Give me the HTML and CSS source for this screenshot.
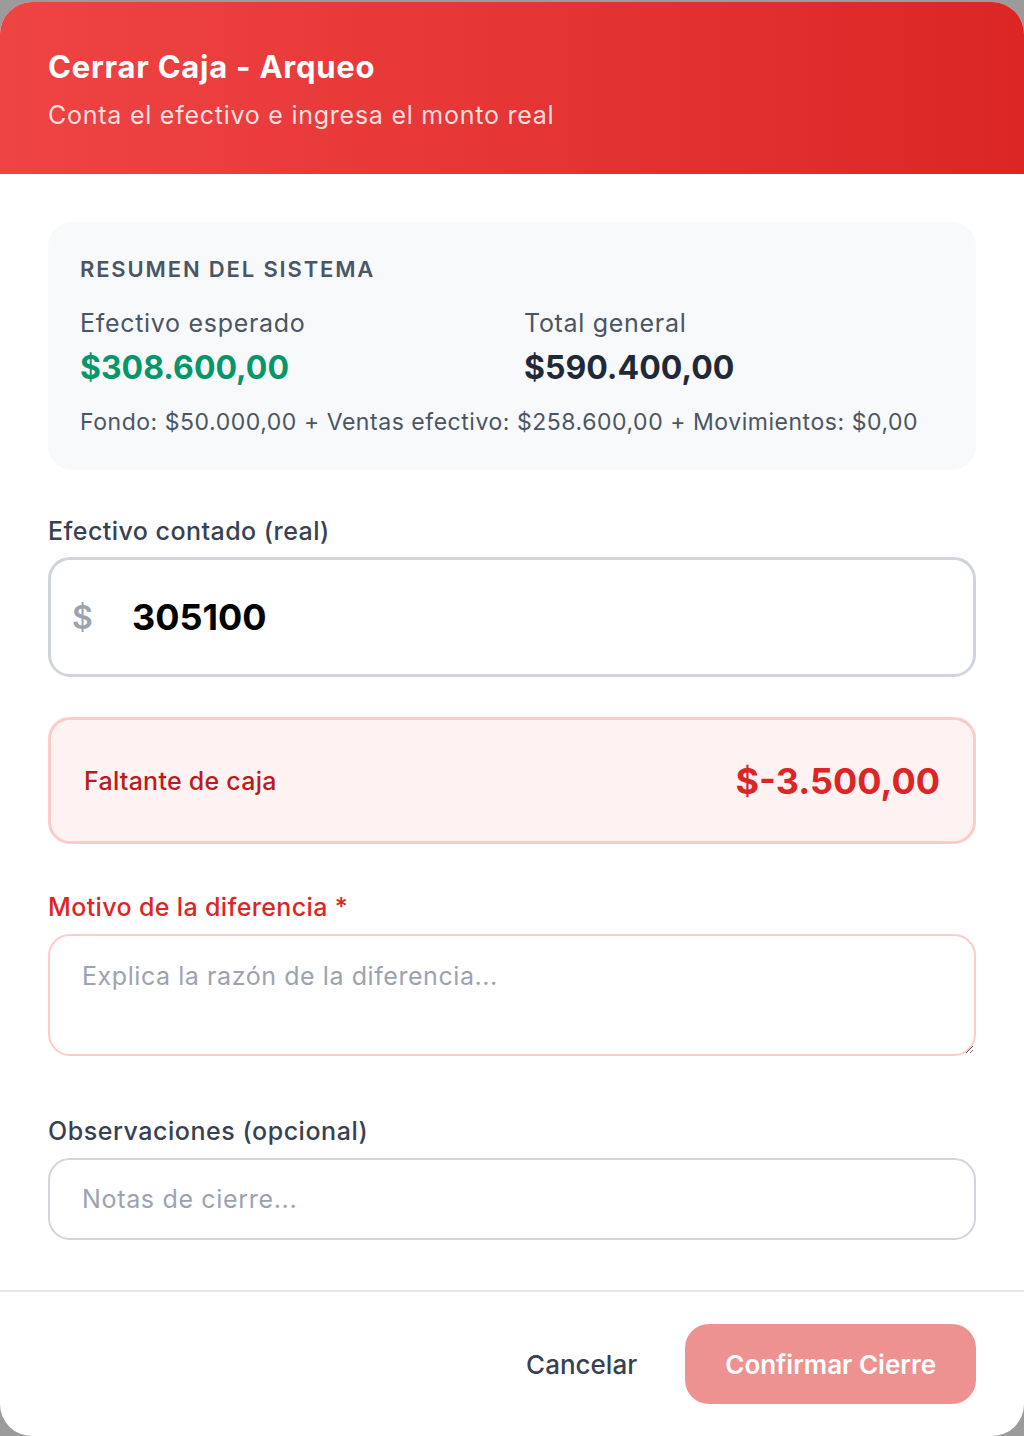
FILE: index.html
```html
<!DOCTYPE html>
<html lang="es">
<head>
<meta charset="utf-8">
<title>Cerrar Caja - Arqueo</title>
<link rel="stylesheet" href="styles.css">
</head>
<body>
<div class="modal">
  <div class="header">
    <h1 class="title">Cerrar Caja - Arqueo</h1>
    <p class="subtitle">Conta el efectivo e ingresa el monto real</p>
  </div>
  <div class="content">
    <div class="summary">
      <div class="summary-title">RESUMEN DEL SISTEMA</div>
      <div class="summary-grid">
        <div>
          <div class="summary-label">Efectivo esperado</div>
          <div class="summary-amount green">$308.600,00</div>
        </div>
        <div>
          <div class="summary-label">Total general</div>
          <div class="summary-amount dark">$590.400,00</div>
        </div>
      </div>
      <div class="summary-detail">Fondo: $50.000,00 + Ventas efectivo: $258.600,00 + Movimientos: $0,00</div>
    </div>

    <label class="field-label first">Efectivo contado (real)</label>
    <div class="money-input">
      <span class="currency">$</span>
      <input class="money-value" type="text" value="305100">
    </div>

    <div class="diff-box">
      <span class="diff-label">Faltante de caja</span>
      <span class="diff-amount">$-3.500,00</span>
    </div>

    <label class="field-label red">Motivo de la diferencia *</label>
    <textarea class="textarea" placeholder="Explica la razón de la diferencia..."></textarea>

    <label class="field-label obs">Observaciones (opcional)</label>
    <input class="text-input" type="text" placeholder="Notas de cierre...">
  </div>
  <div class="footer">
    <button class="btn-cancel" type="button">Cancelar</button>
    <button class="btn-confirm" type="button">Confirmar Cierre</button>
  </div>
</div>
</body>
</html>
```
FILE: styles.css
```css
* { box-sizing: border-box; }
html, body { margin: 0; padding: 0; }
body {
  background: #9b9b9b;
  font-family: Inter, "Noto Sans", sans-serif;
  width: 1024px;
  height: 1436px;
  overflow: hidden;
}
.modal {
  margin-top: 2px;
  width: 1024px;
  height: 1434px;
  background: #ffffff;
  border-radius: 32px;
  overflow: hidden;
  display: flex;
  flex-direction: column;
}
.header {
  background: linear-gradient(90deg, #ef4444 0%, #dc2626 100%);
  padding: 45px 48px 40px;
  height: 172px;
}
.title {
  margin: 0;
  color: #ffffff;
  font-size: 31px;
  line-height: 40px;
  font-weight: 700;
  letter-spacing: 0.75px;
}
.subtitle {
  margin: 10px 0 0;
  color: rgba(255, 255, 255, 0.85);
  font-size: 25px;
  line-height: 36px;
  font-weight: 400;
  letter-spacing: 0.75px;
}
.content {
  padding: 48px 48px 50px;
  display: flex;
  flex-direction: column;
}
.summary {
  background: #f8f9fb;
  border-radius: 24px;
  padding: 32px 32px 32px;
}
.summary-title {
  font-size: 22px;
  line-height: 30px;
  font-weight: 600;
  color: #4b5563;
  letter-spacing: 1.85px;
}
.summary-grid {
  margin-top: 21px;
  display: grid;
  grid-template-columns: 1fr 1fr;
  column-gap: 24px;
}
.summary-label {
  font-size: 25px;
  line-height: 36px;
  color: #4b5563;
  letter-spacing: 0.7px;
}
.summary-amount {
  margin-top: 5px;
  font-size: 32px;
  line-height: 44px;
  font-weight: 700;
}
.green { color: #059669; }
.dark { color: #1f2937; }
.summary-detail {
  margin-top: 16px;
  font-size: 23px;
  line-height: 32px;
  color: #4b5563;
  letter-spacing: 0.54px;
}
.field-label {
  display: block;
  font-size: 25px;
  line-height: 36px;
  font-weight: 500;
  color: #374151;
  margin-bottom: 8px;
  letter-spacing: 0.45px;
}
.field-label.first { margin-top: 43px; }
.field-label.red { color: #dc2626; margin-top: 45px; margin-bottom: 9px; letter-spacing: 0.36px; }
.field-label.obs { margin-top: 57px; margin-bottom: 9px; letter-spacing: 0.54px; }
.money-input {
  height: 120px;
  border: 3px solid #d1d5db;
  border-radius: 22px;
  display: flex;
  align-items: center;
  padding-left: 21px;
}
.currency {
  font-size: 32px;
  font-weight: 600;
  color: #9ca3af;
  width: 60px;
}
.money-value {
  border: none;
  outline: none;
  background: transparent;
  font-family: Inter, "Noto Sans", sans-serif;
  font-size: 36px;
  font-weight: 700;
  color: #000000;
  padding: 0;
  flex: 1;
}
.diff-box {
  margin-top: 40px;
  height: 127px;
  background: #fef2f2;
  border: 3px solid #fecaca;
  border-radius: 22px;
  display: flex;
  align-items: center;
  justify-content: space-between;
  padding: 0 33px;
}
.diff-label {
  font-size: 25px;
  font-weight: 500;
  color: #b91c1c;
  letter-spacing: 0.25px;
}
.diff-amount {
  font-size: 36px;
  font-weight: 700;
  color: #dc2626;
}
.textarea {
  display: block;
  width: 100%;
  height: 122px;
  border: 2px solid #fecaca;
  border-radius: 22px;
  padding: 22px 32px;
  font-family: Inter, "Noto Sans", sans-serif;
  font-size: 25px;
  line-height: 36px;
  color: #111827;
  outline: none;
  resize: vertical;
  letter-spacing: 0.57px;
}
.textarea::placeholder, .text-input::placeholder { color: #9ca3af; }
.text-input {
  display: block;
  width: 100%;
  height: 82px;
  border: 2px solid #d1d5db;
  border-radius: 22px;
  padding: 0 32px;
  font-family: Inter, "Noto Sans", sans-serif;
  font-size: 25px;
  color: #111827;
  outline: none;
  letter-spacing: 0.67px;
}
.footer {
  border-top: 2px solid #e5e7eb;
  padding: 32px 48px 31px;
  display: flex;
  justify-content: flex-end;
  align-items: center;
  gap: 24px;
}
.btn-cancel {
  background: transparent;
  border: none;
  font-family: Inter, "Noto Sans", sans-serif;
  font-size: 26px;
  font-weight: 500;
  color: #374151;
  padding: 0 24px;
  height: 80px;
}
.btn-confirm {
  height: 80px;
  background: #ee9291;
  border: none;
  border-radius: 24px;
  font-family: Inter, "Noto Sans", sans-serif;
  font-size: 26px;
  font-weight: 600;
  color: #ffffff;
  padding: 0 40px;
}
```
